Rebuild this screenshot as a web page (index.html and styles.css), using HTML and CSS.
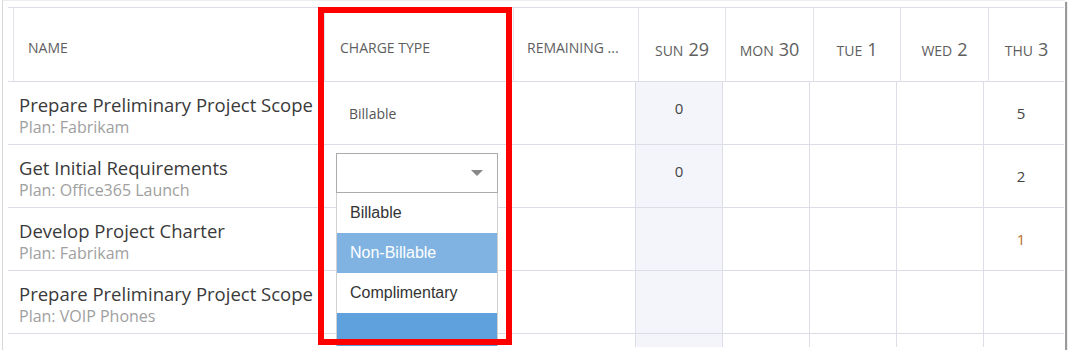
FILE: index.html
```html
<!DOCTYPE html>
<html lang="en">
<head>
  <meta charset="UTF-8" />
  <meta name="viewport" content="width=device-width, initial-scale=1.0"/>
  <title>Timesheet - Charge Type</title>
  <link rel="stylesheet" href="styles.css">
</head>
<body>

  <div class="window">
    <div class="grid">

      <!-- Column headers -->
      <div class="head">
        <div class="hcell col-name">Name</div>
        <div class="hcell col-charge">Charge Type</div>
        <div class="hcell col-remaining">Remaining ...</div>
        <div class="hcell day col-sun"><span class="dow">Sun</span><span class="date">29</span></div>
        <div class="hcell day col-mon"><span class="dow">Mon</span><span class="date">30</span></div>
        <div class="hcell day col-tue"><span class="dow">Tue</span><span class="date">1</span></div>
        <div class="hcell day col-wed"><span class="dow">Wed</span><span class="date">2</span></div>
        <div class="hcell day col-thu"><span class="dow">Thu</span><span class="date">3</span></div>
      </div>

      <!-- Task rows -->
      <div class="row">
        <div class="cell task">
          <div class="title">Prepare Preliminary Project Scope</div>
          <div class="plan">Plan: Fabrikam</div>
        </div>
        <div class="cell charge">Billable</div>
        <div class="cell remaining"></div>
        <div class="cell hours today"><span class="val raised">0</span></div>
        <div class="cell hours"></div>
        <div class="cell hours"></div>
        <div class="cell hours"></div>
        <div class="cell hours last"><span class="val">5</span></div>
      </div>

      <div class="row">
        <div class="cell task">
          <div class="title">Get Initial Requirements</div>
          <div class="plan">Plan: Office365 Launch</div>
        </div>
        <div class="cell charge editing">
          <div class="select"><span class="caret"></span></div>
        </div>
        <div class="cell remaining"></div>
        <div class="cell hours today"><span class="val raised">0</span></div>
        <div class="cell hours"></div>
        <div class="cell hours"></div>
        <div class="cell hours"></div>
        <div class="cell hours last"><span class="val">2</span></div>
      </div>

      <div class="row">
        <div class="cell task">
          <div class="title">Develop Project Charter</div>
          <div class="plan">Plan: Fabrikam</div>
        </div>
        <div class="cell charge"></div>
        <div class="cell remaining"></div>
        <div class="cell hours today"></div>
        <div class="cell hours"></div>
        <div class="cell hours"></div>
        <div class="cell hours"></div>
        <div class="cell hours last"><span class="val warn">1</span></div>
      </div>

      <div class="row">
        <div class="cell task">
          <div class="title">Prepare Preliminary Project Scope</div>
          <div class="plan">Plan: VOIP Phones</div>
        </div>
        <div class="cell charge"></div>
        <div class="cell remaining"></div>
        <div class="cell hours today"></div>
        <div class="cell hours"></div>
        <div class="cell hours"></div>
        <div class="cell hours"></div>
        <div class="cell hours last"></div>
      </div>

      <div class="row">
        <div class="cell task"></div>
        <div class="cell charge"></div>
        <div class="cell remaining"></div>
        <div class="cell hours today"></div>
        <div class="cell hours"></div>
        <div class="cell hours"></div>
        <div class="cell hours"></div>
        <div class="cell hours last"></div>
      </div>
    </div>

    <!-- open dropdown of the charge type select -->
    <ul class="options">
      <li>Billable</li>
      <li class="hover">Non-Billable</li>
      <li>Complimentary</li>
      <li class="selected"></li>
    </ul>

    <!-- red highlight around the column -->
    <div class="callout"></div>
  </div>

</body>
</html>
```

FILE: styles.css
```css
body {
  margin: 0;
  font-family: "Open Sans", Arial, sans-serif;
  background: #fff;
}

.window {
  position: relative;
  margin-left: 2px;
  width: 1062px;
  height: 349px;
  border-top: 1px solid #ececec;
  border-left: 1px solid #d8d8d8;
  box-shadow: 2px 2px 1px #9a9a9a;
  background: #fff;
}

.grid {
  margin: 6px 0 0 5px;
  width: 1056px;
  height: 339px;
  overflow: hidden;
  border-top: 1px solid #dcdde6;
}

/* header */
.head {
  display: flex;
  height: 74px;
  box-sizing: border-box;
  border-bottom: 1px solid #dcdde6;
}

.hcell {
  box-sizing: border-box;
  display: flex;
  align-items: center;
  padding: 6px 0 0 14px;
  border-right: 1px solid #e2e2ea;
  font-size: 14px;
  text-transform: uppercase;
  color: #5e5e5e;
  white-space: nowrap;
}

.col-name {
  margin-left: 5px;
  width: 312px;
  border-left: 1px solid #e2e2ea;
}

.col-charge { width: 189px; padding-left: 15px; }
.col-remaining { width: 125px; padding-left: 13px; }
.col-sun { width: 87px; }
.col-mon { width: 88px; }
.col-tue { width: 87px; }
.col-wed { width: 88px; }
.col-thu { flex: 1; border-right: none; }

.day {
  justify-content: center;
  align-items: baseline;
  padding: 29px 0 0 0;
}

.day .date {
  font-size: 18px;
  margin-left: 5px;
}

/* rows */
.row {
  display: flex;
  height: 63px;
  box-sizing: border-box;
  border-bottom: 1px solid #dcdde6;
}

.cell {
  box-sizing: border-box;
}

.task {
  width: 314px;
  padding: 12px 0 0 11px;
  white-space: nowrap;
}

.title {
  font-size: 18.5px;
  line-height: 22px;
  color: #3a3a3a;
}

.plan {
  font-size: 16px;
  line-height: 22px;
  color: #a0a0a0;
}

.charge {
  width: 188px;
  display: flex;
  align-items: center;
  padding-left: 27px;
  font-size: 14px;
  color: #555;
}

.charge.editing {
  align-items: flex-start;
  padding: 8px 0 0 14px;
}

.select {
  position: relative;
  box-sizing: border-box;
  width: 162px;
  height: 40px;
  border: 1px solid #ababab;
  background: #fff;
}

.caret {
  position: absolute;
  right: 14px;
  top: 16px;
  width: 0;
  height: 0;
  border-left: 6px solid transparent;
  border-right: 6px solid transparent;
  border-top: 6px solid #888;
}

.remaining {
  width: 125px;
}

.hours {
  width: 87px;
  display: flex;
  align-items: center;
  justify-content: center;
  border-left: 1px solid #dcdde6;
  font-size: 15px;
  color: #444;
}

.hours.last {
  flex: 1;
  padding-right: 6px;
}

.today {
  background: #f4f5fa;
}

.val.raised {
  margin-bottom: 11px;
}

.val.warn {
  color: #b8702a;
}

/* dropdown list */
.options {
  position: absolute;
  left: 333px;
  top: 192px;
  width: 162px;
  height: 153px;
  margin: 0;
  padding: 0;
  list-style: none;
  box-sizing: border-box;
  border-left: 1px solid #d0d0d0;
  border-right: 1px solid #d0d0d0;
  background: #fff;
  overflow: hidden;
  font-family: "Liberation Sans", Arial, sans-serif;
  font-size: 16px;
  color: #333;
}

.options li {
  height: 40px;
  line-height: 40px;
  padding-left: 13px;
}

.options li.hover {
  background: #80b3e2;
  color: #fff;
}

.options li.selected {
  background: #5fa1dc;
}

.callout {
  position: absolute;
  left: 315px;
  top: 6px;
  width: 194px;
  height: 338px;
  box-sizing: border-box;
  border: 6px solid #ff0000;
}
```
